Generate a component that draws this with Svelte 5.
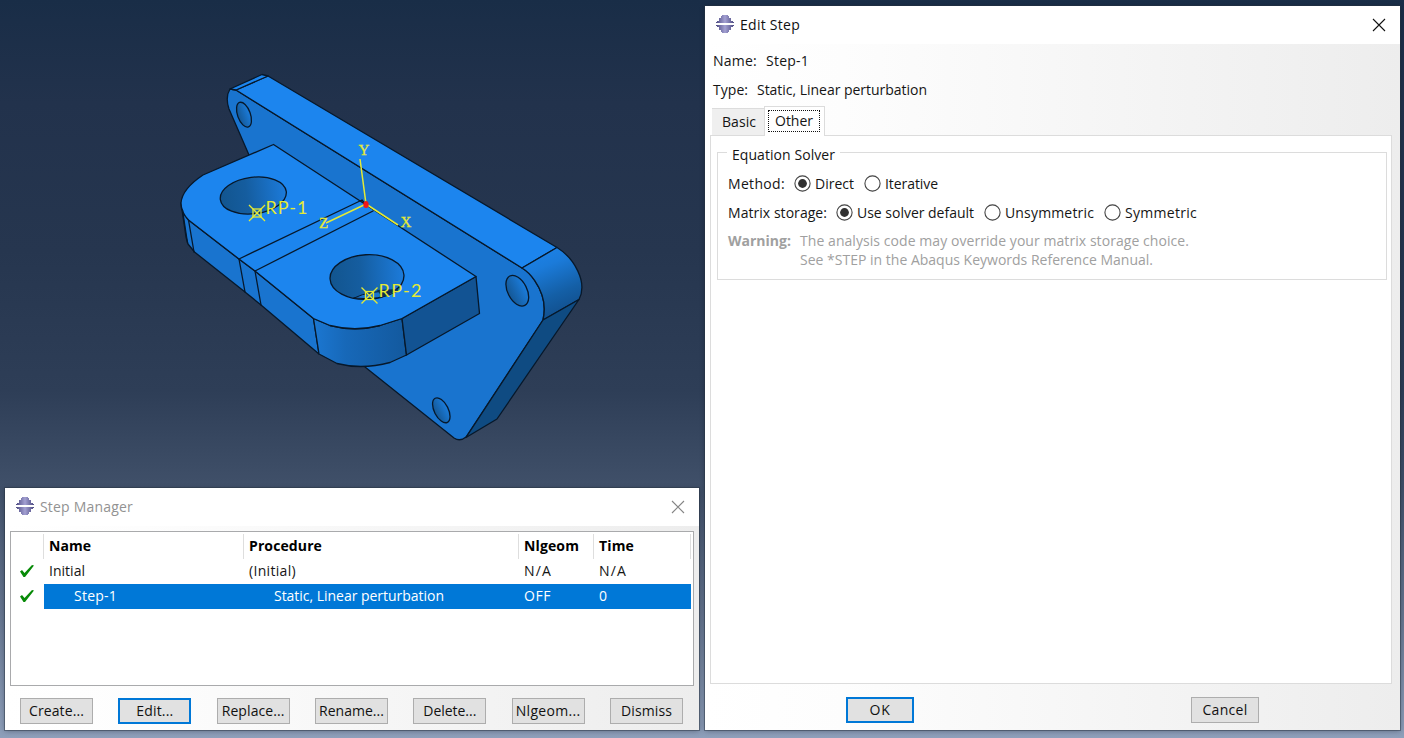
<script>
  const columns = ['Name', 'Procedure', 'Nlgeom', 'Time'];
  const columnWidths = [41, 72, 54, 34];
  const rows = [
    { cells: ['Initial', '(Initial)', 'N/A', 'N/A'], widths: [35, 46, 27, 27], selected: false },
    { cells: ['Step-1', 'Static, Linear perturbation', 'OFF', '0'], widths: [42, 169, 26, 8], selected: true }
  ];
  const actions = [
    { label: 'Create...', w: 54 },
    { label: 'Edit...', w: 36, primary: true },
    { label: 'Replace...', w: 62 },
    { label: 'Rename...', w: 64 },
    { label: 'Delete...', w: 52 },
    { label: 'Nlgeom...', w: 64 },
    { label: 'Dismiss', w: 50 }
  ];

  let tab = $state('Other');
  let method = $state('Direct');
  let storage = $state('Use solver default');
  const methods = [{ label: 'Direct', w: 38 }, { label: 'Iterative', w: 52 }];
  const storages = [
    { label: 'Use solver default', w: 116 },
    { label: 'Unsymmetric', w: 88 },
    { label: 'Symmetric', w: 71 }
  ];

  // Tracks a label so that it spans the given number of pixels.
  function fit(node, width) {
    const natural = node.getBoundingClientRect().width;
    const count = node.textContent.length;
    node.style.letterSpacing = `${(width + 1 - natural) / count}px`;
  }
</script>

{#snippet logo()}
  <svg class="logo" width="18" height="18" viewBox="0 0 18 18" shape-rendering="crispEdges">
    <defs>
      <linearGradient id="lg" x1="0" x2="1" y1="0" y2="0">
        <stop offset="0" stop-color="#4d4a82" /><stop offset=".5" stop-color="#a3a0d2" /><stop offset="1" stop-color="#4d4a82" />
      </linearGradient>
    </defs>
    <path fill="url(#lg)" d="M6 0h6v1h1v2h2v3h2v1h1v1H0V7h1V6h2V3h2V1h1z M0 10h18v1h-1v1h-2v3h-2v2h-1v1H6v-1H5v-2H3v-3H1v-1H0z" />
  </svg>
{/snippet}

{#snippet close()}
  <svg class="close" width="14" height="14" viewBox="0 0 14 14"><path d="M1 1l12 12M13 1L1 13" /></svg>
{/snippet}

{#snippet radio(item, checked, pick)}
  <button class="radio" onclick={pick}>
    <svg width="17" height="17" viewBox="0 0 17 17">
      <circle cx="8.5" cy="8.5" r="7.6" fill="#fff" stroke="#444" stroke-width="1.1" />
      {#if checked}<circle cx="8.5" cy="8.5" r="4.4" fill="#303030" />{/if}
    </svg>
    <span use:fit={item.w}>{item.label}</span>
  </button>
{/snippet}

<div class="desktop">
  <svg class="viewport" width="704" height="488" viewBox="0 0 704 488">
    <defs>
      <linearGradient id="bore" x1="0" x2="1"><stop offset="0" stop-color="#12558f" /><stop offset=".4" stop-color="#155d9f" /><stop offset="1" stop-color="#1c7bdb" /></linearGradient>
      <linearGradient id="small" x1="0" x2="1"><stop offset="0" stop-color="#145795" /><stop offset="1" stop-color="#1b7ddd" /></linearGradient>
      <linearGradient id="nose" x1="0" x2="1"><stop offset="0" stop-color="#1b77d2" /><stop offset=".35" stop-color="#1768b8" /><stop offset="1" stop-color="#13599e" /></linearGradient>
      <linearGradient id="corner" x1="0" y1="0" x2=".35" y2="1"><stop offset="0" stop-color="#1c85ee" /><stop offset=".35" stop-color="#1b7bda" /><stop offset=".75" stop-color="#145fa6" /><stop offset="1" stop-color="#125190" /></linearGradient>
    </defs>
    <g stroke="#07182a" stroke-width="1.3" stroke-linejoin="round" stroke-linecap="round">
      <path fill="#1974cf" d="M230 89L236 90L522 268C532 274 539 286 542 295Q546 307 543 320L466 437Q460 442 454 438L365 367L249 155L229 109Q225 97 230 89Z" />
      <path fill="#1c85ee" d="M236 90L268 76L557 247.500L522 268Z" />
      <path fill="#1c85ee" d="M230 89L262 74.500L268 76L236 90Z" />
      <path fill="url(#corner)" d="M522 268L557 247.500C574 258 588 282 579 299.500L543 320Q546 307 542 295C539 286 532 274 522 268Z" />
      <path fill="#0f4b82" d="M543 320L579 299.500L497 419L466 437.500Z" />
      <ellipse cx="244" cy="114.700" rx="6.400" ry="13" transform="rotate(-20 244 114.700)" fill="url(#small)" />
      <ellipse cx="517.300" cy="290.700" rx="9.600" ry="16.500" transform="rotate(-27 517.300 290.700)" fill="url(#small)" />
      <ellipse cx="441.300" cy="410.300" rx="7" ry="13.500" transform="rotate(-27 441.300 410.300)" fill="url(#small)" />

      <path fill="#1974cf" d="M181 203Q181 212 188.500 220L239 259L255 271L313.500 318.500L319 354L261 305L245 292L194.500 252L188 244L186 237Z" />
      <path fill="url(#nose)" d="M313.500 318.500L330 325.500Q355 332 380 325.500L402 318.500L406.500 355L390 362.500Q362 370 337 363.500L319 354Z" />
      <path fill="#125393" d="M402 318.500L476 276.500L479.500 313.500L406.500 355Z" />
      <path fill="#1c85ee" d="M273.500 144.500L476 276.500L402 318.500L380 325.500Q355 332 330 325.500L313.500 318.500L255 271L239 259L188.500 220Q181 212 181 203Q182 189 203 175Z" />
      <path fill="none" d="M188.500 220L194 252M182.500 210L187.500 243M239 259L245 292M255 271L261 305M240 258.500L362 200L366 205M255 271L373 211" />
      <ellipse cx="253.300" cy="195.500" rx="33.200" ry="18.300" transform="rotate(-7 253.300 195.500)" fill="url(#bore)" />
      <ellipse cx="367" cy="277" rx="37" ry="22.300" transform="rotate(-3 367 277)" fill="url(#bore)" />
      <path fill="#1974cf" stroke-width="1" d="M354 298Q370 290 398 291Q380 301 354 298Z" />
      <path fill="#0d2f4f" d="M377 290L399 289Q391 294 382 297Z" stroke="none" />
    </g>
    <g stroke="#e4ea35" stroke-width="1.5" fill="none">
      <path d="M366 204L360 159M366 204L326 223M366 204L398 225" />
      {#each [[257, 213], [369.500, 295.500]] as [x, y]}
        <g stroke-width="1.300">
          <rect x={x - 4} y={y - 4} width="8" height="8" />
          <path d="M{x - 8} {y - 8}l16 16M{x + 8} {y - 8}l-16 16" />
        </g>
      {/each}
    </g>
    <ellipse cx="366" cy="204.500" rx="2.700" ry="3.500" fill="#f01616" />
    <g fill="#e4ea35" class="rp">
      <text x="265.500" y="213.500" textLength="42">RP-1</text>
      <text x="378.500" y="296.500" textLength="43">RP-2</text>
    </g>
    <g fill="#e4ea35" class="axis">
      <text x="358.500" y="155">Y</text>
      <text x="400.500" y="227">X</text>
      <text x="319" y="228">Z</text>
    </g>
  </svg>

  <section class="window manager">
    <header class="titlebar inactive">{@render logo()}<span use:fit={92}>Step Manager</span>{@render close()}</header>
    <div class="content">
      <div class="table">
        <div class="row head">
          <span></span>
          {#each columns as column, i}<span class="cell"><b use:fit={columnWidths[i]}>{column}</b></span>{/each}
        </div>
        {#each rows as row}
          <div class="row" class:selected={row.selected}>
            <svg class="tick" width="16" height="14" viewBox="0 0 16 14"><path d="M1 7.500L3 6L5.500 9L13 1L15 1.500L6 13H4.500Z" fill="#078a07" /></svg>
            {#each row.cells as cell, i}<span class="cell"><i use:fit={row.widths[i]}>{cell}</i></span>{/each}
          </div>
        {/each}
      </div>
      <footer class="actions">
        {#each actions as action}
          <button class="push" class:primary={action.primary}><span use:fit={action.w}>{action.label}</span></button>
        {/each}
      </footer>
    </div>
  </section>

  <section class="window editor">
    <header class="titlebar">{@render logo()}<span use:fit={59}>Edit Step</span>{@render close()}</header>
    <div class="content">
      <p class="info"><span use:fit={43}>Name:</span><span class="value" use:fit={42}>Step-1</span></p>
      <p class="info type"><span use:fit={34}>Type:</span><span class="value" use:fit={169}>Static, Linear perturbation</span></p>
      <nav class="tabs">
        <button class="tab" class:active={tab === 'Basic'} onclick={() => (tab = 'Basic')}><span use:fit={33}>Basic</span></button>
        <button class="tab" class:active={tab === 'Other'} onclick={() => (tab = 'Other')}><span class="focus"><i use:fit={37}>Other</i></span></button>
      </nav>
      <div class="panel">
        <fieldset>
          <legend><span use:fit={102}>Equation Solver</span></legend>
          <div class="line first">
            <span use:fit={56}>Method:</span>
            {#each methods as item}{@render radio(item, method === item.label, () => (method = item.label))}{/each}
          </div>
          <div class="line">
            <span use:fit={98}>Matrix storage:</span>
            {#each storages as item}{@render radio(item, storage === item.label, () => (storage = item.label))}{/each}
          </div>
          <div class="warning">
            <b use:fit={62}>Warning:</b>
            <div>
              <p><span use:fit={388}>The analysis code may override your matrix storage choice.</span></p>
              <p><span use:fit={352}>See *STEP in the Abaqus Keywords Reference Manual.</span></p>
            </div>
          </div>
        </fieldset>
      </div>
      <footer class="confirm">
        <button class="push primary"><span use:fit={20}>OK</span></button>
        <button class="push"><span use:fit={44}>Cancel</span></button>
      </footer>
    </div>
  </section>
</div>

<style>
  :global(body) { margin: 0; overflow: hidden; }
  .desktop, .desktop * { box-sizing: border-box; }
  .desktop {
    position: relative;
    width: 1404px;
    height: 738px;
    overflow: hidden;
    background: linear-gradient(#192d47 0, #22324c 14%, #26364f 34%, #2e3e57 53%, #405069 66%, #65758f 83%, #8e9fba 100%);
    font: 14px/19px "Open Sans", "Noto Sans", sans-serif;
    color: #151515;
  }
  span, b, i { white-space: pre; }
  i { font-style: normal; }
  p { margin: 0; }
  button { font: inherit; color: inherit; padding: 0; }
  .viewport { position: absolute; left: 0; top: 0; }
  .rp { font: 400 18px Lato, sans-serif; }
  .axis { font: 15px "Liberation Serif", serif; }
  .axis text { stroke: #e4ea35; stroke-width: .3px; }

  .window {
    position: absolute;
    display: flex;
    flex-direction: column;
    background: #fff;
    box-shadow: 0 0 0 1px rgba(40, 50, 65, .45), 0 1px 5px rgba(10, 15, 25, .35);
  }
  .manager { left: 5px; top: 488px; width: 694px; height: 242px; }
  .editor { left: 705px; top: 6px; width: 695px; height: 724px; }
  .titlebar { flex: none; height: 38px; padding: 0 14px 2px 11px; display: flex; align-items: center; background: #fff; color: #111; }
  .titlebar span { margin-left: 6px; }
  .titlebar .close { margin: 2px 0 0 auto; stroke: #111; stroke-width: 1.100; fill: none; }
  .inactive { color: #929292; }
  .inactive .close { stroke: #858585; }
  .content { flex: 1; min-height: 0; display: flex; flex-direction: column; background: linear-gradient(90deg, #fff 0, #fdfdfd 20%, #f5f5f5 60%, #ededed 100%); }

  .manager .content { padding: 5px 5px 6px; }
  .table { height: 155px; border: 1px solid #a9aaac; background: #fff; padding: 2px 1px 1px 0; }
  .row { display: grid; grid-template-columns: 33px 199px 275px 75px 98px; height: 25px; align-items: center; }
  .cell { height: 25px; line-height: 24px; padding-left: 6px; }
  .cell:nth-of-type(1) { padding-left: 5px; }
  .head .cell { border-left: 1px solid #dedede; padding-left: 5px; color: #000; }
  .head .cell:nth-of-type(2) { margin-left: -1px; }
  .head .cell:last-child { border-right: 1px solid #dedede; }
  .tick { margin: -2px 0 0 8px; }
  .selected .cell { background: #0078d7; color: #fff; }
  .selected .cell:nth-of-type(1) { padding-left: 30px; }
  .selected .cell:nth-of-type(2) { padding-left: 31px; }
  .actions { display: flex; justify-content: space-between; padding: 12px 11px 0 10px; }
  .push { width: 73px; height: 26px; border: 1px solid #adadad; background: #e1e1e1; color: #111; text-align: center; line-height: 22px; }
  .push.primary { border: 2px solid #0078d7; line-height: 20px; }

  .editor .content { padding: 7px 8px 6px 5px; }
  .info { height: 19px; padding-left: 3px; display: flex; gap: 9px; }
  .type { margin-top: 10px; }
  .tabs { display: flex; align-items: flex-end; height: 30px; margin-top: 7px; padding-left: 2px; position: relative; margin-bottom: -1px; z-index: 1; }
  .tab { width: 53px; height: 27px; margin-bottom: 1px; border: 1px solid #dcdcdc; border-bottom: 0; border-left: 0; background: #efefef; line-height: 26px; padding-left: 2px; }
  .tab.active { width: 61px; height: 30px; margin-bottom: 0; margin-left: -1px; padding: 3px 4px 4px 3px; border-left: 1px solid #dcdcdc; background: #fff; }
  .focus { display: block; height: 22px; border: 1px dotted #111; line-height: 20px; }
  .panel { height: 549px; border: 1px solid #dcdcdc; background: #fff; padding: 7px 4px 0 6px; }
  fieldset { margin: 0; border: 1px solid #dcdcdc; padding: 0 9px; height: 137px; min-width: 0; }
  legend { height: 19px; padding: 0 5px; line-height: 23px; }
  .line { display: flex; align-items: center; height: 29px; padding-left: 1px; }
  .line.first { margin-top: 7px; }
  .radio { display: flex; align-items: center; gap: 4px; border: 0; background: none; margin-left: 9px; }
  .radio + .radio { margin-left: 10px; }
  .warning { display: flex; gap: 9px; color: #a0a0a0; margin-top: 4px; padding-left: 1px; }
  .confirm { display: flex; justify-content: space-between; padding: 13px 133px 0 136px; }
  .confirm .push { width: 68px; }
</style>
